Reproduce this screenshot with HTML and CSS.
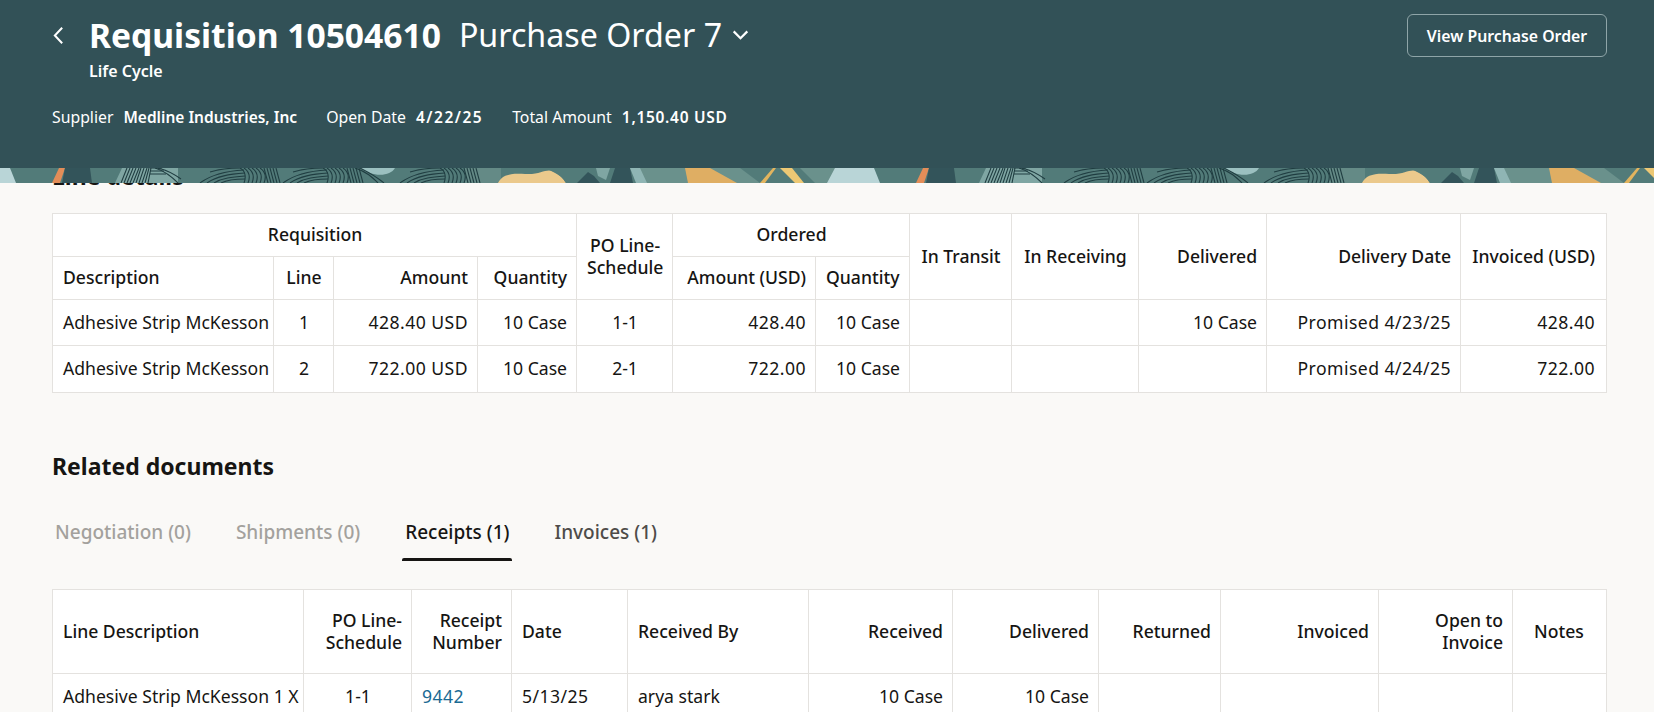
FILE: index.html
```html
<!DOCTYPE html>
<html lang="en">
<head>
<meta charset="utf-8">
<title>Requisition 10504610</title>
<link rel="stylesheet" href="styles.css">
</head>
<body>
<div class="page">
  <header class="hero">
    <div class="hero-band">
      <div class="hero-top">
        <svg class="back" viewBox="0 0 12 20" aria-hidden="true"><path d="M10 1.5 2 10l8 8.5" fill="none" stroke="#fff" stroke-width="2.2"/></svg>
        <div class="titles">
          <div class="title-line">
            <h1>Requisition 10504610</h1>
            <span class="subtitle">Purchase Order 7</span>
            <svg class="caret" viewBox="0 0 18 11" aria-hidden="true"><path d="M1.5 1.5 9 9l7.5-7.5" fill="none" stroke="#fff" stroke-width="2.4"/></svg>
          </div>
          <div class="lifecycle">Life Cycle</div>
        </div>
        <button class="view-btn">View Purchase Order</button>
      </div>
      <div class="meta">
        <div class="meta-item"><span>Supplier</span><b>Medline Industries, Inc</b></div>
        <div class="meta-item"><span>Open Date</span><b class="date">4/22/25</b></div>
        <div class="meta-item"><span>Total Amount</span><b class="amount">1,150.40 USD</b></div>
      </div>
    </div>
    <svg class="strip" width="1654" height="15" aria-hidden="true">
      <defs>
        <g id="fp" fill="none" stroke="#1f3d41" stroke-width="1.1">
          <path d="M0 15C12 6 26 3 44 2"/><path d="M7 15C17 8 29 6 45 5"/><path d="M14 15C22 10 32 9 45 8"/><path d="M21 15C27 12 35 11 45 11"/><path d="M10 4C20 1 30 0 40 0"/>
          <path d="M40 0C46 3 46 10 44 15"/><path d="M44 0C50 4 50 10 48 15"/><path d="M48 0C54 4 54 10 52 15"/><path d="M52 0C58 4 58 10 56 15"/><path d="M56 0C62 4 62 10 60 15"/><path d="M60 0C66 4 66 10 64 15"/><path d="M64 0 68 15"/><path d="M67 0 71 15"/><path d="M70 0 74 15"/><path d="M73 0 77 15"/><path d="M76 0 80 15"/>
        </g>
        <pattern id="tile" width="864" height="15" patternUnits="userSpaceOnUse">
          <rect width="864" height="15" fill="#527b79"/>
          <rect x="465" width="36" height="15" fill="#648a86"/>
          <rect x="640" width="196" height="15" fill="#6a918c"/>
          <polygon points="0,0 10,0 16,15 0,15" fill="#b9d5d7"/>
          <polygon points="835,0 864,0 864,15 827,15" fill="#b9d5d7"/>
          <polygon points="59,0 65,0 60,15 52,15" fill="#e38d58"/>
          <path d="M65 0H90L92 15H62Z" fill="#33545a"/>
          <polygon points="122,0 178,0 178,15 115,15" fill="#7fa6a3"/>
          <g fill="none" stroke="#1f3d41" stroke-width="1.1">
            <path d="M121 15 127 0M124 15 130 0M127 15 133 0M130 15 136 0M133 15 139 0M136 15 141 0M139 15 144 0M142 15 147 0M145 15 149 0M148 15 151 0M150 0H162M150 3H164M150 6H166"/>
            <path d="M155 0C165 3 172 9 178 15M158 0C166 2 174 6 181 11"/>
          </g>
          <use href="#fp" x="200"/>
          <use href="#fp" x="283"/>
          <path d="M360 0H395C390 9 372 9 360 0Z" fill="#9bc0c0"/>
          <path d="M360 0C370 5 378 10 384 15M355 0C367 4 372 9 378 15" fill="none" stroke="#1f3d41" stroke-width="1.1"/>
          <use href="#fp" x="400"/>
          <path d="M498 15C502 7 510 5 525 6 540 7 545 1 552 3 558 5 563 10 566 15Z" fill="#ebc98c"/>
          <path d="M545 0H600C605 8 590 0 578 15H566C560 5 550 3 545 0Z" fill="#527b79"/>
          <polygon points="588,4 577,15 600,15 594,8" fill="#33545a"/>
          <polygon points="596,0 610,0 606,12 598,8" fill="#7fa6a3"/>
          <polygon points="615,0 630,0 633,15 610,15" fill="#33545a"/>
          <polygon points="630,0 640,0 647,15 636,15" fill="#8fb5b4"/>
          <polygon points="685,0 710,0 737,15 688,15" fill="#dfae63"/>
          <polygon points="740,0 800,0 815,15 760,15" fill="#527b79"/>
          <polygon points="760,15 773,0 776,0 765,15" fill="#e2b45e"/>
          <polygon points="780,0 792,0 804,15 795,15" fill="#edc874"/>
        </pattern>
      </defs>
      <rect width="1654" height="15" fill="url(#tile)"/>
    </svg>
  </header>

  <main class="content">
    <h2 class="line-heading">Line details</h2>
    <table class="grid grid-lines">
      <colgroup><col class="a1"><col class="a2"><col class="a3"><col class="a4"><col class="a5"><col class="a6"><col class="a7"><col class="a8"><col class="a9"><col class="a10"><col class="a11"><col class="a12"></colgroup>
      <thead>
        <tr class="r-top">
          <th colspan="4" class="c">Requisition</th>
          <th rowspan="2" class="c">PO Line-<br>Schedule</th>
          <th colspan="2" class="c">Ordered</th>
          <th rowspan="2" class="c">In Transit</th>
          <th rowspan="2" class="c">In Receiving</th>
          <th rowspan="2" class="r">Delivered</th>
          <th rowspan="2" class="r">Delivery Date</th>
          <th rowspan="2" class="r">Invoiced (USD)</th>
        </tr>
        <tr class="r-sub">
          <th>Description</th><th class="c">Line</th><th class="r">Amount</th><th class="r">Quantity</th>
          <th class="r">Amount (USD)</th><th class="r">Quantity</th>
        </tr>
      </thead>
      <tbody>
        <tr><td>Adhesive Strip McKesson</td><td class="c">1</td><td class="r n">428.40 USD</td><td class="r">10 Case</td><td class="c">1-1</td><td class="r n">428.40</td><td class="r">10 Case</td><td></td><td></td><td class="r">10 Case</td><td class="r n">Promised 4/23/25</td><td class="r n">428.40</td></tr>
        <tr><td>Adhesive Strip McKesson</td><td class="c">2</td><td class="r n">722.00 USD</td><td class="r">10 Case</td><td class="c">2-1</td><td class="r n">722.00</td><td class="r">10 Case</td><td></td><td></td><td></td><td class="r n">Promised 4/24/25</td><td class="r n">722.00</td></tr>
      </tbody>
    </table>

    <h2 class="related-heading">Related documents</h2>
    <nav class="tabs">
      <span class="tab off">Negotiation (0)</span>
      <span class="tab off">Shipments (0)</span>
      <span class="tab on">Receipts (1)</span>
      <span class="tab">Invoices (1)</span>
    </nav>

    <table class="grid grid-receipts">
      <colgroup><col class="b1"><col class="b2"><col class="b3"><col class="b4"><col class="b5"><col class="b6"><col class="b7"><col class="b8"><col class="b9"><col class="b10"><col class="b11"></colgroup>
      <thead>
        <tr class="r-head">
          <th>Line Description</th><th class="r">PO Line-<br>Schedule</th><th class="r">Receipt<br>Number</th><th>Date</th><th>Received By</th><th class="r">Received</th><th class="r">Delivered</th><th class="r">Returned</th><th class="r">Invoiced</th><th class="r">Open to<br>Invoice</th><th class="c">Notes</th>
        </tr>
      </thead>
      <tbody>
        <tr><td>Adhesive Strip McKesson 1 X</td><td class="c">1-1</td><td class="n"><a href="#">9442</a></td><td class="n">5/13/25</td><td>arya stark</td><td class="r">10 Case</td><td class="r">10 Case</td><td></td><td></td><td></td><td></td></tr>
      </tbody>
    </table>
  </main>
</div>
</body>
</html>
```

FILE: styles.css
```css
* { box-sizing: border-box; }
html, body { margin: 0; height: 100%; }
body {
  background: #faf9f7;
  color: #161513;
  font-family: "Noto Sans", "Liberation Sans", sans-serif;
  font-size: 17.6px;
  overflow: hidden;
}
.page { position: relative; height: 712px; overflow: hidden; }

.hero { position: absolute; top: 0; left: 0; right: 0; z-index: 2; color: #fff; }
.hero-band { background: #325157; height: 168px; padding: 14px 47px 0 52px; }
.strip { display: block; }
.hero-top { display: flex; align-items: flex-start; }
.back { width: 11px; height: 19px; margin: 12px 25px 0 1px; flex: none; }
.titles { flex: 1; }
.title-line { display: flex; align-items: center; height: 44px; margin-top: -1px; }
h1 { margin: 0; font-size: 33.6px; font-weight: 700; line-height: 44px; }
.subtitle { font-size: 32.2px; margin-left: 18px; line-height: 44px; }
.caret { width: 17px; height: 10px; margin: 0 0 0 10px; }
.lifecycle { font-size: 16px; font-weight: 600; line-height: 20px; margin-top: 4px; }
.view-btn {
  width: 200px; height: 43px; background: transparent; color: #fff;
  border: 1px solid #8fa5a8; border-radius: 6px;
  font: 600 15.8px "Noto Sans", sans-serif;
}
.meta { display: flex; gap: 29px; margin-top: 25px; font-size: 15.8px; line-height: 22px; }
.meta-item { display: flex; gap: 10px; }
.meta-item b { font-weight: 600; font-size: 15.5px; }
.meta-item .date { letter-spacing: 1.5px; }
.meta-item .amount { letter-spacing: .7px; }

.content { padding: 161px 47px 0 52px; }
h2 { margin: 0; font-size: 23px; font-weight: 700; line-height: 30px; }
.line-heading { margin-bottom: 22px; }
.related-heading { margin-top: 58px; }

.grid { width: 1554px; table-layout: fixed; border-collapse: collapse; background: #fff; }
.grid th, .grid td { border: 1px solid #e4e2df; padding: 0 9px 2px 10px; text-align: left; line-height: 22px; white-space: nowrap; }
.grid th { font-weight: 500; }
.grid tr > :last-child { padding-right: 11px; }
.grid .c { text-align: center; }
.grid .r { text-align: right; }
.grid .n { letter-spacing: .45px; }
.grid tbody tr { height: 46px; }
.grid-lines tbody tr:last-child { height: 47px; }
.r-top { height: 43px; }
.r-sub { height: 43px; }
.r-head { height: 84px; }
.grid a { color: #1a6a93; text-decoration: none; }

.a1 { width: 221px; } .a2 { width: 60px; } .a3 { width: 144px; } .a4 { width: 99px; }
.a5 { width: 96px; } .a6 { width: 143px; } .a7 { width: 94px; } .a8 { width: 102px; }
.a9 { width: 127px; } .a10 { width: 128px; } .a11 { width: 194px; } .a12 { width: 146px; }
.b1 { width: 251px; } .b2 { width: 108px; } .b3 { width: 100px; } .b4 { width: 116px; }
.b5 { width: 181px; } .b6 { width: 144px; } .b7 { width: 146px; } .b8 { width: 122px; }
.b9 { width: 158px; } .b10 { width: 134px; } .b11 { width: 94px; }

.tabs { display: flex; gap: 39px; margin-top: 29px; margin-bottom: 28px; height: 51px; }
.tab { padding: 0 3px; line-height: 44px; font-size: 19px; font-weight: 500; color: #4e4c49; position: relative; }
.tab.off { color: #a3a19d; }
.tab.on { color: #161513; }
.tab.on::after {
  content: ""; position: absolute; left: 0; right: 0; bottom: 0; height: 3px;
  background: #161513; border-radius: 2px 2px 0 0;
}
```
